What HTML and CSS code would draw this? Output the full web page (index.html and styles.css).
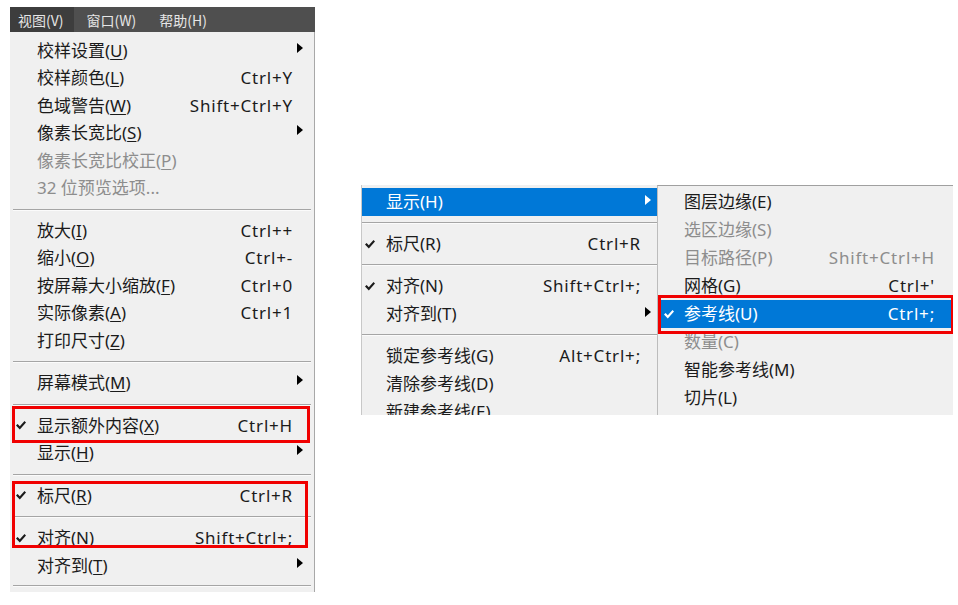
FILE: index.html
```html
<!DOCTYPE html>
<html lang="zh-CN">
<head>
  <meta charset="UTF-8" />
  <meta name="viewport" content="width=device-width, initial-scale=1.0"/>
  <title>视图菜单</title>
  <link rel="stylesheet" href="styles.css">
</head>
<body>

  <div class="page">

    <!-- Left: full View menu -->
    <div class="app-menu">
      <div class="menubar">
        <span class="bar-item active">视图(V)</span>
        <span class="bar-item">窗口(W)</span>
        <span class="bar-item">帮助(H)</span>
      </div>

      <div class="drop">
        <div class="item"><span class="check"></span><span class="label">校样设置(<u>U</u>)</span><span class="key"></span><span class="more"><i class="arrow"></i></span></div>
        <div class="item"><span class="check"></span><span class="label">校样颜色(<u>L</u>)</span><span class="key">Ctrl+Y</span><span class="more"></span></div>
        <div class="item"><span class="check"></span><span class="label">色域警告(<u>W</u>)</span><span class="key">Shift+Ctrl+Y</span><span class="more"></span></div>
        <div class="item"><span class="check"></span><span class="label">像素长宽比(<u>S</u>)</span><span class="key"></span><span class="more"><i class="arrow"></i></span></div>
        <div class="item disabled"><span class="check"></span><span class="label">像素长宽比校正(<u>P</u>)</span><span class="key"></span><span class="more"></span></div>
        <div class="item disabled"><span class="check"></span><span class="label">32 位预览选项...</span><span class="key"></span><span class="more"></span></div>
        <div class="sep"></div>
        <div class="item"><span class="check"></span><span class="label">放大(<u>I</u>)</span><span class="key">Ctrl++</span><span class="more"></span></div>
        <div class="item"><span class="check"></span><span class="label">缩小(<u>O</u>)</span><span class="key">Ctrl+-</span><span class="more"></span></div>
        <div class="item"><span class="check"></span><span class="label">按屏幕大小缩放(<u>F</u>)</span><span class="key">Ctrl+0</span><span class="more"></span></div>
        <div class="item"><span class="check"></span><span class="label">实际像素(<u>A</u>)</span><span class="key">Ctrl+1</span><span class="more"></span></div>
        <div class="item"><span class="check"></span><span class="label">打印尺寸(<u>Z</u>)</span><span class="key"></span><span class="more"></span></div>
        <div class="sep"></div>
        <div class="item"><span class="check"></span><span class="label">屏幕模式(<u>M</u>)</span><span class="key"></span><span class="more"><i class="arrow"></i></span></div>
        <div class="sep"></div>
        <div class="item"><span class="check"><svg class="tick" viewBox="0 0 10 9"><path d="M0 4.6 L1.6 3.1 L3.8 5.2 L8.5 0 L10 1.5 L3.8 8.6 Z"/></svg></span><span class="label">显示额外内容(<u>X</u>)</span><span class="key">Ctrl+H</span><span class="more"></span></div>
        <div class="item"><span class="check"></span><span class="label">显示(<u>H</u>)</span><span class="key"></span><span class="more"><i class="arrow"></i></span></div>
        <div class="sep"></div>
        <div class="item"><span class="check"><svg class="tick" viewBox="0 0 10 9"><path d="M0 4.6 L1.6 3.1 L3.8 5.2 L8.5 0 L10 1.5 L3.8 8.6 Z"/></svg></span><span class="label">标尺(<u>R</u>)</span><span class="key">Ctrl+R</span><span class="more"></span></div>
        <div class="sep"></div>
        <div class="item"><span class="check"><svg class="tick" viewBox="0 0 10 9"><path d="M0 4.6 L1.6 3.1 L3.8 5.2 L8.5 0 L10 1.5 L3.8 8.6 Z"/></svg></span><span class="label">对齐(<u>N</u>)</span><span class="key">Shift+Ctrl+;</span><span class="more"></span></div>
        <div class="item"><span class="check"></span><span class="label">对齐到(<u>T</u>)</span><span class="key"></span><span class="more"><i class="arrow"></i></span></div>
        <div class="sep last"></div>

        <!-- red annotation boxes -->
        <div class="mark mark-extras"></div>
        <div class="mark mark-snap"></div>
      </div>
    </div>

    <!-- Right: Show submenu opened -->
    <div class="cascade">
      <div class="menu main">
        <div class="item hover"><span class="check"></span><span class="label">显示(H)</span><span class="key"></span><span class="more"><i class="arrow"></i></span></div>
        <div class="sep"></div>
        <div class="item"><span class="check"><svg class="tick" viewBox="0 0 10 9"><path d="M0 4.6 L1.6 3.1 L3.8 5.2 L8.5 0 L10 1.5 L3.8 8.6 Z"/></svg></span><span class="label">标尺(R)</span><span class="key">Ctrl+R</span><span class="more"></span></div>
        <div class="sep"></div>
        <div class="item"><span class="check"><svg class="tick" viewBox="0 0 10 9"><path d="M0 4.6 L1.6 3.1 L3.8 5.2 L8.5 0 L10 1.5 L3.8 8.6 Z"/></svg></span><span class="label">对齐(N)</span><span class="key">Shift+Ctrl+;</span><span class="more"></span></div>
        <div class="item"><span class="check"></span><span class="label">对齐到(T)</span><span class="key"></span><span class="more"><i class="arrow"></i></span></div>
        <div class="sep"></div>
        <div class="item"><span class="check"></span><span class="label">锁定参考线(G)</span><span class="key">Alt+Ctrl+;</span><span class="more"></span></div>
        <div class="item"><span class="check"></span><span class="label">清除参考线(D)</span><span class="key"></span><span class="more"></span></div>
        <div class="item"><span class="check"></span><span class="label">新建参考线(E)</span><span class="key"></span><span class="more"></span></div>
      </div>

      <div class="menu sub">
        <div class="item"><span class="check"></span><span class="label">图层边缘(E)</span><span class="key"></span></div>
        <div class="item disabled"><span class="check"></span><span class="label">选区边缘(S)</span><span class="key"></span></div>
        <div class="item disabled"><span class="check"></span><span class="label">目标路径(P)</span><span class="key">Shift+Ctrl+H</span></div>
        <div class="item"><span class="check"></span><span class="label">网格(G)</span><span class="key">Ctrl+'</span></div>
        <div class="item hover"><span class="check"><svg class="tick" viewBox="0 0 10 9"><path d="M0 4.6 L1.6 3.1 L3.8 5.2 L8.5 0 L10 1.5 L3.8 8.6 Z"/></svg></span><span class="label">参考线(U)</span><span class="key">Ctrl+;</span></div>
        <div class="item disabled"><span class="check"></span><span class="label">数量(C)</span><span class="key"></span></div>
        <div class="item"><span class="check"></span><span class="label">智能参考线(M)</span><span class="key"></span></div>
        <div class="item"><span class="check"></span><span class="label">切片(L)</span><span class="key"></span></div>

        <div class="mark mark-guides"></div>
      </div>
    </div>

  </div>

</body>
</html>
```

FILE: styles.css
```css
html, body {
  margin: 0;
  padding: 0;
  background: #ffffff;
  font-family: "Noto Sans", "Noto Sans CJK SC", sans-serif;
  color: #1b1b1b;
}

.page {
  display: flex;
  align-items: flex-start;
  gap: 46px;
  padding: 7px 0 0 10px;
}

/* Left menu */
.app-menu {
  width: 305px;
}

.menubar {
  display: flex;
  gap: 5px;
  height: 25px;
  background: #4f4f4f;
}
.bar-item {
  display: flex;
  align-items: center;
  padding: 0 10px 0 8px;
  font-family: "Noto Sans CJK SC", sans-serif;
  font-size: 14px;
  color: #e6e6e6;
}
.bar-item.active {
  background: #3d3d3d;
}

.drop {
  position: relative;
  background: #f0f0f0;
  border-right: 1px solid #a8a8a8;
  padding-top: 5px;
}

/* Menu rows */
.item {
  display: grid;
  grid-template-columns: 27px 1fr auto 21px;
  align-items: center;
  height: 27.5px;
  font-size: 17px;
  line-height: 20px;
  white-space: nowrap;
}
.item u {
  text-underline-offset: 2px;
  text-decoration-thickness: 1px;
}
.check {
  display: flex;
  align-items: center;
  padding-left: 6px;
}
.tick {
  width: 10px;
  height: 9px;
  fill: #1b1b1b;
}
.key {
  letter-spacing: 0.8px;
}
.more {
  display: flex;
  align-items: center;
  padding-left: 4px;
  height: 100%;
}
.arrow {
  display: block;
  width: 0;
  height: 0;
  margin-top: -6px;
  border-left: 6px solid #000;
  border-top: 5px solid transparent;
  border-bottom: 5px solid transparent;
}

.item.disabled {
  color: #8d8d8d;
}

.sep {
  height: 15px;
  display: flex;
  align-items: center;
  padding: 0 3px;
}
.sep.last {
  height: 12px;
}
.sep::before {
  content: '';
  flex: 1;
  height: 1px;
  background: #a5a5a5;
  border-bottom: 1px solid #fbfbfb;
}

/* Red annotation boxes */
.mark {
  position: absolute;
  box-sizing: border-box;
  border: 3px solid #f00000;
}
.mark-extras {
  top: 374px;
  left: 2px;
  width: 298px;
  height: 37px;
}
.mark-snap {
  top: 449px;
  left: 2px;
  width: 296px;
  height: 67px;
}
.mark-guides {
  top: 109px;
  left: 0;
  width: 296px;
  height: 39px;
}

/* Right: cascading menus */
.cascade {
  display: flex;
  margin-top: 178px;
  height: 230px;
  overflow: hidden;
}

.menu {
  background: #f0f0f0;
  width: 296px;
  box-sizing: border-box;
}
.menu .item {
  height: 28px;
}
.menu .sep {
  height: 14px;
  padding: 0;
}

.main {
  border-left: 1px solid #c8c8c8;
  padding-top: 3px;
}
.main .item {
  grid-template-columns: 24px 1fr auto 16px;
}
.main .check {
  padding-left: 3px;
}
.main .arrow {
  margin-top: -4px;
}

.sub {
  position: relative;
  border-left: 1px solid #bcbcbc;
  border-top: 1px solid #a0a0a0;
  padding-top: 2px;
}
.sub .item {
  grid-template-columns: 26px 1fr auto 18px;
}

.item.hover {
  background: #0078d7;
  color: #ffffff;
}
.item.hover .tick {
  fill: #ffffff;
}
.item.hover .arrow {
  border-left-color: #ffffff;
}
```
